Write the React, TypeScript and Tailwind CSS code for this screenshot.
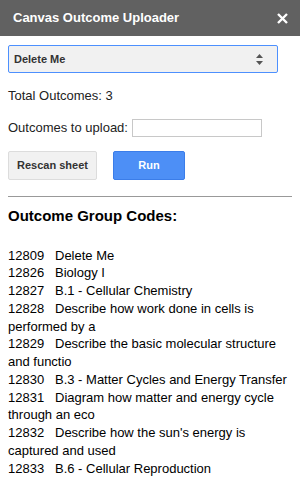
import React from "react";

const items: [string, string][] = [
  ["12809", "Delete Me"],
  ["12826", "Biology I"],
  ["12827", "B.1 - Cellular Chemistry"],
  ["12828", "Describe how work done in cells is performed by a"],
  ["12829", "Describe the basic molecular structure and functio"],
  ["12830", "B.3 - Matter Cycles and Energy Transfer"],
  ["12831", "Diagram how matter and energy cycle through an eco"],
  ["12832", "Describe how the sun's energy is captured and used"],
  ["12833", "B.6 - Cellular Reproduction"],
];

export default function App() {
  return (
    <div className="w-[300px] h-[479px] bg-white overflow-hidden text-[#222] font-['Liberation_Sans',Arial,sans-serif]">
      <div className="h-[36px] bg-[#616161] flex items-center justify-between pl-[13px] pr-[12px]">
        <span className="text-white font-bold text-[13px]">Canvas Outcome Uploader</span>
        <svg width="11" height="11" viewBox="0 0 11 11">
          <path d="M1 1L10 10M10 1L1 10" stroke="white" strokeWidth="2.4" />
        </svg>
      </div>
      <div className="px-[8px]">
        <div className="mt-[9px] w-[270px] h-[28px] border border-[#4d90fe] bg-[#f1f1f1] rounded-[2px] flex items-center justify-between pl-[5px] pr-[14px]">
          <span className="font-bold text-[11px] text-[#333]">Delete Me</span>
          <svg width="7" height="11" viewBox="0 0 7 11">
            <path d="M3.5 0L7 4H0Z M0 7H7L3.5 11Z" fill="#555" />
          </svg>
        </div>
        <div className="mt-[15px] text-[13px] leading-[16px]">Total Outcomes: 3</div>
        <div className="mt-[14px] flex items-center text-[13px]">
          <span>Outcomes to upload:</span>
          <div className="ml-[4px] w-[130px] h-[18px] border border-[#c8c8c8] bg-white" />
        </div>
        <div className="mt-[13px] flex gap-[16px]">
          <div className="w-[89px] h-[29px] bg-[#f1f1f1] border border-[#dcdcdc] rounded-[2px] flex items-center justify-center font-bold text-[11px] text-[#333]">
            Rescan sheet
          </div>
          <div className="w-[72px] h-[29px] bg-[#4d8ff6] border border-[#3b7de9] rounded-[2px] flex items-center justify-center font-bold text-[11px] text-white">
            Run
          </div>
        </div>
        <div className="mt-[16px] h-px bg-[#999]" />
        <div className="mt-[9px] font-bold text-[15px] text-black leading-[20px]">Outcome Group Codes:</div>
        <div className="mt-[21px] text-[13px] leading-[17.75px] text-black">
          {items.map(([c, t]) => (
            <div key={c}>
              {c}
              {"\u00a0\u00a0 "}
              {t}
            </div>
          ))}
        </div>
      </div>
    </div>
  );
}
